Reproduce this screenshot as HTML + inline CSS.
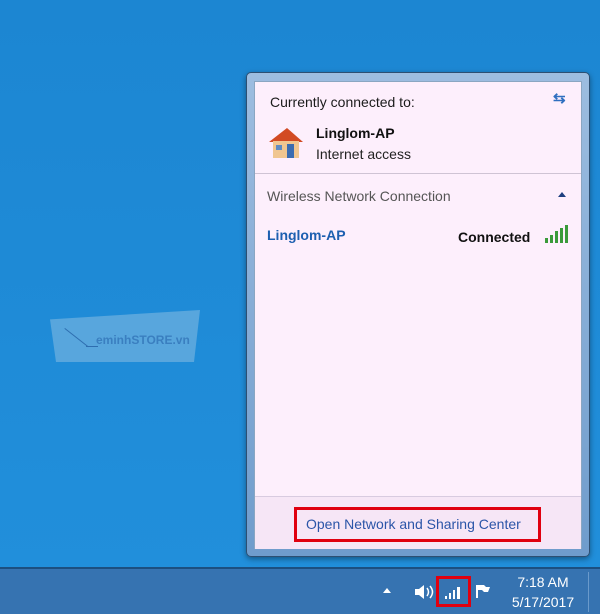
<!DOCTYPE html>
<html><head><style>
body{margin:0;width:600px;height:614px;overflow:hidden;background:#1f8ad5;font-family:"Liberation Sans",sans-serif;position:relative}
.a{position:absolute}
</style></head><body>
<div class="a" style="left:0;top:0;width:600px;height:568px;background:linear-gradient(180deg,#1c86d2,#218fdb)"></div>
<!-- logo -->
<div class="a" style="left:50px;top:310px;width:150px;height:52px;background:#58a6dd;clip-path:polygon(0 18%,100% 0,96% 100%,4% 100%)"></div>
<div class="a" style="left:96px;top:333px;font-size:12px;font-weight:bold;color:#3a7fc0">eminhSTORE.vn</div>
<div class="a" style="left:65px;top:328px;width:30px;height:1px;background:#2e6eb0;transform:rotate(38deg);transform-origin:0 0"></div>
<div class="a" style="left:86px;top:346px;width:12px;height:1px;background:#2e6eb0"></div>
<!-- taskbar -->
<div class="a" style="left:0;top:567px;width:600px;height:2px;background:#1c4f80"></div>
<div class="a" style="left:0;top:569px;width:600px;height:45px;background:#3673b1"></div>
<div class="a" style="left:383px;top:588px;width:0;height:0;border-left:4px solid transparent;border-right:4px solid transparent;border-bottom:5px solid #fff"></div>
<svg class="a" style="left:413px;top:583px" width="22" height="18"><path d="M2 6h4l5-4v14l-5-4H2z" fill="#fff"/><path d="M14 5q3 4 0 8M17 3q5 6 0 12" stroke="#fff" fill="none" stroke-width="1.5"/></svg>
<svg class="a" style="left:443px;top:582px" width="22" height="20"><rect x="2" y="14" width="2" height="3" fill="#fff"/><rect x="6" y="11" width="2" height="6" fill="#fff"/><rect x="10" y="8" width="2" height="9" fill="#fff"/><rect x="14" y="5" width="3" height="12" fill="#fff"/></svg>
<div class="a" style="left:436px;top:576px;width:35px;height:31px;border:3px solid #e00010;box-sizing:border-box"></div>
<svg class="a" style="left:474px;top:583px" width="18" height="16"><path d="M2 2h8l2 2h4l-2 5h-4l-2-2H4v8H2z" fill="#fff"/></svg>
<div class="a" style="left:508px;top:572px;width:70px;text-align:center;color:#fff;font-size:14px;line-height:20px">7:18 AM<br>5/17/2017</div>
<div class="a" style="left:588px;top:572px;width:1px;height:40px;background:#6a9acb"></div>
<!-- popup -->
<div class="a" style="left:246px;top:72px;width:344px;height:485px;background:linear-gradient(180deg,#9dbde0,#6f9ccc);border:1px solid #2d4f72;border-radius:5px;box-sizing:border-box;box-shadow:0 2px 6px rgba(0,0,0,.4)"></div>
<div class="a" style="left:254px;top:81px;width:328px;height:468px;background:#fdeffc;border:1px solid #8aa6c2;box-sizing:border-box"></div>
<div class="a" style="left:255px;top:496px;width:326px;height:52px;background:#f6e6f6;border-top:1px solid #d8cbe0"></div>
<div class="a" style="left:270px;top:94px;font-size:14px;color:#1b1b1b">Currently connected to:</div>
<div class="a" style="left:553px;top:89px;color:#2f6fc0;font-size:15px;font-weight:bold">⇆</div>
<svg class="a" style="left:267px;top:124px" width="40" height="36"><polygon points="2,18 20,4 36,18" fill="#d24a23"/><rect x="6" y="17" width="26" height="17" fill="#f0c690"/><rect x="20" y="20" width="7" height="14" fill="#3b6cb0"/><rect x="9" y="21" width="6" height="5" fill="#5f8bc2"/></svg>
<div class="a" style="left:316px;top:125px;font-size:14px;font-weight:bold;color:#111">Linglom-AP</div>
<div class="a" style="left:316px;top:146px;font-size:14px;color:#222">Internet access</div>
<div class="a" style="left:255px;top:173px;width:326px;height:1px;background:#cfc3d4"></div>
<div class="a" style="left:267px;top:188px;font-size:14px;color:#555">Wireless Network Connection</div>
<div class="a" style="left:558px;top:192px;width:0;height:0;border-left:4px solid transparent;border-right:4px solid transparent;border-bottom:5px solid #1e3f80"></div>
<div class="a" style="left:267px;top:227px;font-size:14px;font-weight:bold;color:#1d5fb0">Linglom-AP</div>
<div class="a" style="left:458px;top:229px;font-size:14px;font-weight:bold;color:#111">Connected</div>
<svg class="a" style="left:543px;top:223px" width="26" height="22"><rect x="2" y="15" width="3" height="5" fill="#3a9a3a"/><rect x="7" y="12" width="3" height="8" fill="#3a9a3a"/><rect x="12" y="8" width="3" height="12" fill="#3a9a3a"/><rect x="17" y="5" width="3" height="15" fill="#3a9a3a"/><rect x="22" y="2" width="3" height="18" fill="#3a9a3a"/></svg>
<div class="a" style="left:294px;top:507px;width:247px;height:35px;border:3px solid #e00010;box-sizing:border-box"></div>
<div class="a" style="left:306px;top:516px;font-size:14px;color:#2b55a8">Open Network and Sharing Center</div>
</body></html>
